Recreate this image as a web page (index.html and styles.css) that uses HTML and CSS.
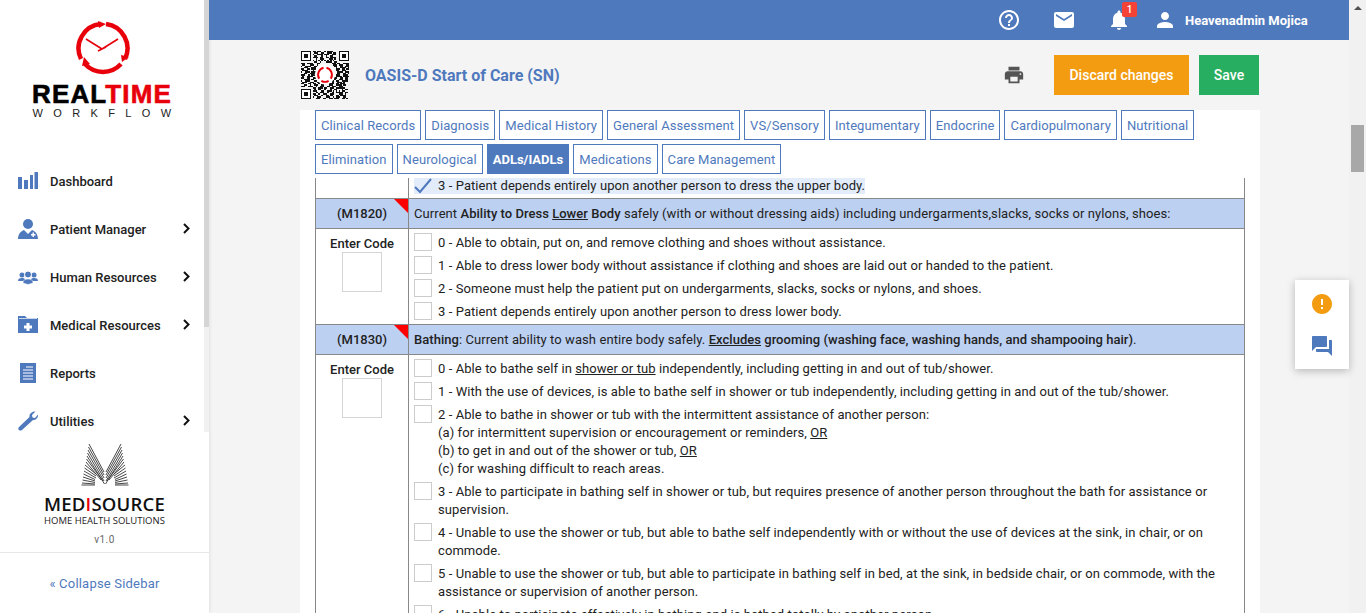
FILE: index.html
```html
<!DOCTYPE html>
<html lang="en">
<head>
    <meta charset="UTF-8">
    <title>OASIS-D Start of Care (SN)</title>
    <link rel="stylesheet" href="styles.css">
</head>
<body>
    <aside class="sidebar">
        <div class="sidebar-top">
            <div class="sidebar-scroll">
                <div class="logo">
                    <svg class="logo-clock" width="56" height="56" viewBox="0 0 56 56">
                        <g fill="none" stroke="#e8000b" stroke-width="4.5">
                            <path d="M26 4 A24.5 24.5 0 0 0 6 39"/>
                            <path d="M31 4 A24.5 24.5 0 0 1 50 39"/>
                            <path d="M10 44 A24.5 24.5 0 0 0 46 44"/>
                        </g>
                        <path d="M23 1 L31 4 L24 8Z M47 42 L54 37 L46 35Z M9 37 L7 46 L15 44Z" fill="#e8000b"/>
                        <path d="M27 29 L11 19 M27 29 L43 19 M23 31 L31 27" stroke="#e8000b" stroke-width="1.6" fill="none"/>
                    </svg>
                    <div class="logo-name"><span>REAL</span><span class="red">TIME</span></div>
                    <div class="logo-sub">WORKFLOW</div>
                </div>
                <nav class="nav">
                    <a class="nav-item">
                        <svg class="nav-icon" viewBox="0 0 20 20"><path d="M0 6h4v12H0zM6 9h4v9H6zM12 4h3v14h-3zM16.500 1H20v17h-3.500z"/></svg>
                        <span>Dashboard</span>
                    </a>
                    <a class="nav-item">
                        <svg class="nav-icon" viewBox="0 0 20 20"><circle cx="10" cy="5" r="5"/><path d="M0 20c0-5 3-8 6-9l4 4 4-4c3 1 6 4 6 9z"/><path d="M13 15h1.500v-1.500h1.500V15h1.500v1.500H16V18h-1.500v-1.500H13z" fill="#fff"/></svg>
                        <span>Patient Manager</span>
                        <svg class="chev" width="7" height="11" viewBox="0 0 7 11"><path d="M1 1l4.500 4.500L1 10" fill="none" stroke="#111" stroke-width="2"/></svg>
                    </a>
                    <a class="nav-item">
                        <svg class="nav-icon" viewBox="0 0 20 20"><circle cx="4" cy="8" r="2.500"/><circle cx="16" cy="8" r="2.500"/><path d="M0 14c0-2 1-3 4-3s3 1 3 3zM13 14c0-2 0-3 3-3s4 1 4 3z"/><circle cx="10" cy="7.500" r="3.500" stroke="#fff"/><path d="M5 16c0-3 2-4 5-4s5 1 5 4l-5 1.500z" stroke="#fff" stroke-width=".5"/></svg>
                        <span>Human Resources</span>
                        <svg class="chev" width="7" height="11" viewBox="0 0 7 11"><path d="M1 1l4.500 4.500L1 10" fill="none" stroke="#111" stroke-width="2"/></svg>
                    </a>
                    <a class="nav-item">
                        <svg class="nav-icon" viewBox="0 0 20 20"><path d="M0 1h7l2 2h11v15H0z"/><path d="M1 3.500h18" stroke="#fff" stroke-width=".7"/><path d="M8.500 8h3v2.500H14v3h-2.500V16h-3v-2.500H6v-3h2.500z" fill="#fff"/></svg>
                        <span>Medical Resources</span>
                        <svg class="chev" width="7" height="11" viewBox="0 0 7 11"><path d="M1 1l4.500 4.500L1 10" fill="none" stroke="#111" stroke-width="2"/></svg>
                    </a>
                    <a class="nav-item">
                        <svg class="nav-icon" viewBox="0 0 20 20"><path d="M2 0h16v20H2z"/><path d="M8 4h7M5 7h10M5 10h10M5 13h10M5 16h10" stroke="#fff" stroke-width="1"/></svg>
                        <span>Reports</span>
                    </a>
                    <a class="nav-item">
                        <svg class="nav-icon" viewBox="0 0 20 20"><path d="M20 3.500c.5 3-2 6-5 5.500L4 19c-1 1-3 .5-3.500-.5-.5-1 0-2 .5-2.500L11.500 6c-.5-3 2.500-6 6-5.500L14 4l.5 2.500L17 7z"/></svg>
                        <span>Utilities</span>
                        <svg class="chev" width="7" height="11" viewBox="0 0 7 11"><path d="M1 1l4.500 4.500L1 10" fill="none" stroke="#111" stroke-width="2"/></svg>
                    </a>
                </nav>
            </div>
            <div class="side-track"><div class="side-thumb"></div></div>
        </div>
        <div class="brand">
            <svg class="brand-mark" width="48" height="42" viewBox="0 0 48 42">
                <g stroke="#333" stroke-width=".9" fill="none">
                    <path d="M8 0L23 28M7.500 3L23 31M7 6L23 34M6.500 9L23 37M6 12L23.500 40M5.500 15L22 37M5 18L20 36"/>
                    <path d="M4 21L15 30M3.500 24L15 32M3 27L15 34M2.500 30L14 35.500M2 33L14 37M1.500 36L14 38.500M1 39L14 40M.5 41H14"/>
                    <path d="M40 0L25 28M40.500 3L25 31M41 6L25 34M41.500 9L25 37M42 12L24.500 40M42.500 15L26 37M43 18L28 36"/>
                    <path d="M44 21L33 30M44.500 24L33 32M45 27L33 34M45.500 30L34 35.500M46 33L34 37M46.500 36L34 38.500M47 39L34 40M47.500 41H34"/>
                </g>
            </svg>
            <div class="brand-name">MED<span class="red">I</span>SOURCE</div>
            <div class="brand-sub">HOME HEALTH SOLUTIONS</div>
            <div class="version">v1.0</div>
        </div>
        <a class="collapse">« Collapse Sidebar</a>
    </aside>

    <div class="main">
        <header class="topbar">
            <svg class="top-icon" width="24" height="24" viewBox="0 0 24 24"><path fill="#fff" d="M11 18h2v-2h-2v2zm1-16C6.480 2 2 6.480 2 12s4.480 10 10 10 10-4.480 10-10S17.520 2 12 2zm0 18c-4.410 0-8-3.590-8-8s3.590-8 8-8 8 3.590 8 8-3.590 8-8 8zm0-14c-2.210 0-4 1.790-4 4h2c0-1.100.9-2 2-2s2 .9 2 2c0 2-3 1.750-3 5h2c0-2.250 3-2.500 3-5 0-2.210-1.790-4-4-4z"/></svg>
            <svg class="top-icon" width="24" height="24" viewBox="0 0 24 24"><path fill="#fff" d="M20 4H4c-1.100 0-2 .9-2 2v12c0 1.100.9 2 2 2h16c1.100 0 2-.9 2-2V6c0-1.100-.9-2-2-2zm0 4-8 5-8-5V6l8 5 8-5v2z"/></svg>
            <div class="bell">
                <svg width="24" height="24" viewBox="0 0 24 24"><path fill="#fff" d="M12 22c1.100 0 2-.9 2-2h-4c0 1.100.9 2 2 2zm6-6v-5c0-3.070-1.630-5.640-4.500-6.320V4c0-.83-.67-1.500-1.500-1.500s-1.500.67-1.500 1.500v.68C7.640 5.360 6 7.920 6 11v5l-2 2v1h16v-1l-2-2z"/></svg>
                <span class="badge">1</span>
            </div>
            <svg class="user-icon" width="24" height="24" viewBox="0 0 24 24"><path fill="#fff" d="M12 12c2.210 0 4-1.790 4-4s-1.790-4-4-4-4 1.790-4 4 1.790 4 4 4zm0 2c-2.670 0-8 1.340-8 4v2h16v-2c0-2.660-5.330-4-8-4z"/></svg>
            <span class="user-name">Heavenadmin Mojica</span>
        </header>

        <div class="content">
            <div class="title-row">
                <svg class="qr" width="48" height="48" viewBox="0 0 33 33" shape-rendering="crispEdges">
                    <path fill="#111" d="M0 0h7v7H0zM26 0h7v7h-7zM0 26h7v7H0z"/>
                    <path fill="#fff" d="M1 1h5v5H1zM27 1h5v5h-5zM1 27h5v5H1z"/>
                    <path fill="#111" d="M2 2h3v3H2zM28 2h3v3h-3zM2 28h3v3H2z"/>
                    <path fill="none" stroke="#111" stroke-width="1" d="M8 .5h2m1 0h3m2 0h1m1 0h4M9 1.500h3m2 0h2m2 0h3m1 0h2M8 2.500h1m2 0h4m1 0h3m2 0h3M9 3.500h2m3 0h1m2 0h1m2 0h2M8 4.500h4m1 0h2m2 0h2m1 0h4M10 5.500h1m2 0h3m3 0h3m1 0h1M8 6.500h1m1 0h1m1 0h1m1 0h1m1 0h1m1 0h1m1 0h1m1 0h1M9 7.500h2m2 0h1m3 0h4m2 0h2M0 8.500h3m1 0h4m3 0h2m8 0h3m1 0h2m2 0h4M1 9.500h2m3 0h3m2 0h1m10 0h3m1 0h3m2 0h2M0 10.500h1m2 0h4m2 0h2m12 0h2m2 0h2m1 0h4M2 11.500h3m2 0h3m14 0h1m2 0h4m1 0h1M0 12.500h2m2 0h2m1 0h3m14 0h3m1 0h2m1 0h3M1 13.500h4m3 0h1m15 0h2m2 0h3M0 14.500h1m2 0h3m1 0h3m15 0h4m1 0h3M2 15.500h2m2 0h4m15 0h2m2 0h2m1 0h1M0 16.500h3m2 0h1m1 0h3m14 0h3m2 0h3M1 17.500h1m2 0h4m2 0h1m13 0h4m1 0h4M0 18.500h2m2 0h2m2 0h3m12 0h2m2 0h2m1 0h2M2 19.500h4m1 0h2m2 0h2m10 0h1m2 0h3m1 0h2M0 20.500h1m2 0h3m3 0h2m2 0h1m6 0h3m1 0h2m2 0h4M1 21.500h3m2 0h3m2 0h3m2 0h4m1 0h2m2 0h3m1 0h1M0 22.500h2m3 0h2m1 0h2m2 0h1m2 0h2m2 0h4m1 0h2m1 0h3M2 23.500h2m2 0h1m2 0h3m2 0h2m3 0h3m2 0h4m1 0h2M0 24.500h3m2 0h3m2 0h1m2 0h3m2 0h2m1 0h3m2 0h3M8 25.500h2m2 0h3m1 0h2m2 0h3m1 0h6M9 26.500h1m2 0h2m2 0h1m3 0h1m2 0h2m3 0h1m1 0h2M8 27.500h3m3 0h2m2 0h3m1 0h1m1 0h1m1 0h1m1 0h2M10 28.500h2m1 0h3m2 0h1m2 0h2m1 0h5m1 0h2M8 29.500h2m2 0h1m2 0h3m2 0h3m3 0h3m1 0h1M9 30.500h3m2 0h1m2 0h2m1 0h2m2 0h2m1 0h4M8 31.500h1m2 0h3m3 0h3m2 0h1m1 0h3m2 0h2M10 32.500h3m2 0h2m2 0h3m1 0h3m2 0h2m1 0h1"/>
                    <circle cx="16.500" cy="16" r="7" fill="#fff" shape-rendering="auto"/>
                    <g fill="none" stroke="#e8000b" stroke-width="1.300" shape-rendering="auto">
                        <path d="M15.500 11.500A5 5 0 0 0 12.500 19"/>
                        <path d="M17.500 11.500A5 5 0 0 1 20.500 19"/>
                        <path d="M14 20.500A5 5 0 0 0 19 20.500"/>
                    </g>
                </svg>
                <h1 class="title">OASIS-D Start of Care (SN)</h1>
                <svg class="print" width="22" height="22" viewBox="0 0 24 24"><path fill="#555" d="M19 8H5c-1.660 0-3 1.340-3 3v6h4v4h12v-4h4v-6c0-1.660-1.340-3-3-3zm-3 11H8v-5h8v5zm3-7c-.55 0-1-.45-1-1s.45-1 1-1 1 .45 1 1-.45 1-1 1zm-1-9H6v4h12V3z"/></svg>
                <button class="btn btn-discard">Discard changes</button>
                <button class="btn btn-save">Save</button>
            </div>

            <div class="card">
                <div class="tabs">
                    <a class="tab">Clinical Records</a>
                    <a class="tab">Diagnosis</a>
                    <a class="tab">Medical History</a>
                    <a class="tab">General Assessment</a>
                    <a class="tab">VS/Sensory</a>
                    <a class="tab">Integumentary</a>
                    <a class="tab">Endocrine</a>
                    <a class="tab">Cardiopulmonary</a>
                    <a class="tab">Nutritional</a>
                    <a class="tab">Elimination</a>
                    <a class="tab">Neurological</a>
                    <a class="tab active">ADLs/IADLs</a>
                    <a class="tab">Medications</a>
                    <a class="tab">Care Management</a>
                </div>

                <div class="form-table">
                    <div class="row">
                        <div class="code-col"></div>
                        <div class="opts opts-top">
                            <div class="opt checked">
                                <svg class="check" width="18" height="16" viewBox="0 0 18 16"><path d="M1 9l5 5L17 1" fill="none" stroke="#4f79bd" stroke-width="2"/></svg>
                                <span>3 - Patient depends entirely upon another person to dress the upper body.</span>
                            </div>
                        </div>
                    </div>

                    <div class="row head">
                        <div class="code-col code-id">(M1820)</div>
                        <div class="head-text">Current <b>Ability to Dress <u>Lower</u> Body</b> safely (with or without dressing aids) including undergarments,slacks, socks or nylons, shoes:</div>
                    </div>
                    <div class="row">
                        <div class="code-col enter">
                            <b>Enter Code</b>
                            <div class="code-box"></div>
                        </div>
                        <div class="opts">
                            <div class="opt"><i class="box"></i><span>0 - Able to obtain, put on, and remove clothing and shoes without assistance.</span></div>
                            <div class="opt"><i class="box"></i><span>1 - Able to dress lower body without assistance if clothing and shoes are laid out or handed to the patient.</span></div>
                            <div class="opt"><i class="box"></i><span>2 - Someone must help the patient put on undergarments, slacks, socks or nylons, and shoes.</span></div>
                            <div class="opt"><i class="box"></i><span>3 - Patient depends entirely upon another person to dress lower body.</span></div>
                        </div>
                    </div>

                    <div class="row head">
                        <div class="code-col code-id">(M1830)</div>
                        <div class="head-text"><b>Bathing</b>: Current ability to wash entire body safely. <b><u>Excludes</u> grooming (washing face, washing hands, and shampooing hair)</b>.</div>
                    </div>
                    <div class="row">
                        <div class="code-col enter">
                            <b>Enter Code</b>
                            <div class="code-box"></div>
                        </div>
                        <div class="opts">
                            <div class="opt"><i class="box"></i><span>0 - Able to bathe self in <u>shower or tub</u> independently, including getting in and out of tub/shower.</span></div>
                            <div class="opt"><i class="box"></i><span>1 - With the use of devices, is able to bathe self in shower or tub independently, including getting in and out of the tub/shower.</span></div>
                            <div class="opt"><i class="box"></i><span>2 - Able to bathe in shower or tub with the intermittent assistance of another person:<br>(a) for intermittent supervision or encouragement or reminders, <u>OR</u><br>(b) to get in and out of the shower or tub, <u>OR</u><br>(c) for washing difficult to reach areas.</span></div>
                            <div class="opt"><i class="box"></i><span>3 - Able to participate in bathing self in shower or tub, but requires presence of another person throughout the bath for assistance or supervision.</span></div>
                            <div class="opt"><i class="box"></i><span>4 - Unable to use the shower or tub, but able to bathe self independently with or without the use of devices at the sink, in chair, or on commode.</span></div>
                            <div class="opt"><i class="box"></i><span>5 - Unable to use the shower or tub, but able to participate in bathing self in bed, at the sink, in bedside chair, or on commode, with the assistance or supervision of another person.</span></div>
                            <div class="opt"><i class="box"></i><span>6 - Unable to participate effectively in bathing and is bathed totally by another person.</span></div>
                        </div>
                    </div>
                </div>
            </div>
        </div>
    </div>

    <div class="page-scroll">
        <div class="arrow-up"></div>
        <div class="page-thumb"></div>
    </div>

    <div class="float-panel">
        <svg width="24" height="24" viewBox="0 0 24 24"><path fill="#f39c12" d="M12 2C6.480 2 2 6.480 2 12s4.480 10 10 10 10-4.480 10-10S17.520 2 12 2zm1 15h-2v-2h2v2zm0-4h-2V7h2v6z"/></svg>
        <svg width="24" height="24" viewBox="0 0 24 24"><path fill="#4f79bd" d="M21 6h-2v9H6v2c0 .55.45 1 1 1h11l4 4V7c0-.55-.45-1-1-1zm-4 6V3c0-.55-.45-1-1-1H3c-.55 0-1 .45-1 1v14l4-4h10c.55 0 1-.45 1-1z"/></svg>
    </div>
</body>
</html>
```

FILE: styles.css
```css
* {
    margin: 0;
    padding: 0;
    box-sizing: border-box;
}

html, body {
    height: 100%;
    overflow: hidden;
}

body {
    display: flex;
    font-family: Roboto, 'Liberation Sans', sans-serif;
    font-size: 13px;
    color: #222;
    background: #f4f4f4;
}

.red {
    color: #e8000b;
}

/* sidebar */
.sidebar {
    width: 209px;
    flex-shrink: 0;
    height: 613px;
    background: #fff;
    box-shadow: 1px 0 3px rgba(0, 0, 0, 0.08);
    display: flex;
    flex-direction: column;
}

.sidebar-top {
    height: 432px;
    flex-shrink: 0;
    display: flex;
    overflow: hidden;
}

.sidebar-scroll {
    flex: 1;
    min-width: 0;
}

.side-track {
    width: 5px;
    flex-shrink: 0;
    background: #f1f1f1;
}

.side-thumb {
    width: 5px;
    height: 327px;
    background: #d5d5d5;
}

.logo {
    display: flex;
    flex-direction: column;
    align-items: center;
    padding-top: 20px;
    height: 157px;
}

.logo-clock {
    margin-left: 2px;
}

.logo-name {
    font-family: 'Liberation Sans', sans-serif;
    font-weight: 700;
    font-size: 26px;
    line-height: 20px;
    letter-spacing: 1.1px;
    margin-top: 8px;
    color: #000;
    -webkit-text-stroke: 0.6px;
}

.logo-sub {
    font-family: 'Liberation Sans', sans-serif;
    font-size: 11px;
    line-height: 12px;
    letter-spacing: 10.4px;
    margin-right: -10px;
    margin-top: 3px;
    color: #222;
}

.nav-item {
    display: flex;
    align-items: center;
    height: 48px;
    padding-left: 18px;
    color: #222;
    font-weight: 500;
    font-size: 13px;
}

.nav-icon {
    width: 20px;
    height: 20px;
    fill: #4f79bd;
    margin-right: 12px;
    flex-shrink: 0;
}

.chev {
    margin-left: auto;
    margin-right: 14px;
    margin-top: -1px;
}

.brand {
    display: flex;
    flex-direction: column;
    align-items: center;
    flex-shrink: 0;
    padding-top: 12px;
    height: 121px;
    border-bottom: 1px solid #e8e8e8;
}

.brand-name {
    font-family: 'Open Sans', sans-serif;
    font-weight: 600;
    font-size: 18.500px;
    line-height: 14px;
    margin-top: 11px;
    color: #111;
    letter-spacing: 0.2px;
}

.brand-sub {
    font-family: 'Open Sans', sans-serif;
    font-size: 9.500px;
    line-height: 10px;
    color: #222;
    margin-top: 5px;
}

.version {
    font-size: 10px;
    line-height: 12px;
    letter-spacing: 0.5px;
    margin-top: 8px;
    color: #666;
}

.collapse {
    display: block;
    text-align: center;
    color: #4f79bd;
    font-size: 13px;
    letter-spacing: 0.2px;
    padding-top: 1px;
    line-height: 59px;
}

/* main area */
.main {
    flex: 1;
    min-width: 0;
    height: 613px;
    overflow: hidden;
}

.topbar {
    height: 40px;
    background: #4f79bd;
    display: flex;
    align-items: center;
    padding-left: 788px;
}

.top-icon {
    margin-right: 31px;
}

.bell {
    position: relative;
    width: 24px;
    height: 24px;
}

.badge {
    position: absolute;
    top: -6px;
    left: 15px;
    width: 15px;
    height: 15px;
    border-radius: 2px;
    background: #f44336;
    color: #fff;
    font-size: 10px;
    line-height: 15px;
    text-align: center;
    font-weight: 500;
}

.user-icon {
    margin-left: 22px;
}

.user-name {
    margin-left: 8px;
    color: #fff;
    font-weight: 700;
    font-size: 13px;
}

.content {
    width: 960px;
    margin-left: 91px;
}

.title-row {
    height: 70px;
    display: flex;
    align-items: center;
}

.qr {
    margin-left: 1px;
}

.title {
    margin-left: 16px;
    font-size: 16px;
    font-weight: 700;
    color: #4f79bd;
}

.print {
    margin-left: auto;
    margin-right: 29px;
}

.btn {
    height: 40px;
    border: none;
    color: #fff;
    font-family: Roboto, sans-serif;
    font-size: 14px;
    font-weight: 500;
}

.btn-discard {
    width: 135px;
    background: #f39c12;
}

.btn-save {
    width: 60px;
    margin-left: 10px;
    margin-right: 1px;
    background: #27ae60;
}

.card {
    background: #fff;
    padding: 0 15px;
}

.tabs {
    display: flex;
    flex-wrap: wrap;
    gap: 4px;
    height: 68px;
    align-content: flex-start;
}

.tab {
    height: 30px;
    padding: 0 5px;
    border: 1px solid #4f79bd;
    color: #4f79bd;
    font-size: 13px;
    line-height: 30px;
    letter-spacing: 0.09px;
}

.tab.active {
    background: #4f79bd;
    color: #fff;
    font-weight: 700;
    letter-spacing: 0;
}

.form-table {
    border-left: 1px solid #888;
    border-right: 1px solid #888;
}

.row {
    display: flex;
    border-bottom: 1px solid #888;
}

.code-col {
    width: 93px;
    flex-shrink: 0;
    border-right: 1px solid #888;
}

.head {
    height: 30px;
    background: #bcd0f2;
}

.code-id {
    position: relative;
    text-align: center;
    font-weight: 500;
    line-height: 29px;
}

.code-id::after {
    content: '';
    position: absolute;
    top: 0;
    right: 0;
    border-top: 14px solid #f00;
    border-left: 14px solid transparent;
}

.head-text {
    padding-left: 5px;
    font-size: 13px;
    line-height: 29px;
    letter-spacing: 0.08px;
}

.head-text b {
    font-weight: 500;
    letter-spacing: 0.03px;
}

.enter {
    text-align: center;
    padding-top: 7px;
}

.enter b {
    display: block;
    font-weight: 500;
    line-height: 16px;
}

.code-box {
    width: 40px;
    height: 40px;
    margin: 0 auto;
    border: 1px solid #d5d5d5;
}

.opts {
    flex: 1;
    padding: 4px 5px;
    min-width: 0;
}

.opts-top {
    padding: 0 5px 4px;
}

.opt {
    display: flex;
    font-size: 13px;
    line-height: 18px;
    margin-bottom: 5px;
    letter-spacing: 0.08px;
}

.opt span {
    padding-top: 1px;
    margin-bottom: -1px;
}

.opt:last-child {
    margin-bottom: 0;
}

.opt.checked {
    align-items: center;
    background: #e3ecfb;
    width: fit-content;
    height: 16px;
    margin-bottom: 0;
}

.opt.checked span {
    padding-top: 0;
    margin-bottom: 0;
}

.check {
    margin-right: 6px;
    flex-shrink: 0;
}

.box {
    width: 18px;
    height: 18px;
    flex-shrink: 0;
    border: 1px solid #ccc;
    margin-right: 6px;
}

/* page scrollbar */
.page-scroll {
    width: 17px;
    flex-shrink: 0;
    height: 613px;
    background: #f1f1f1;
    padding-top: 6px;
}

.arrow-up {
    width: 0;
    margin: 0 auto;
    border-left: 4px solid transparent;
    border-right: 4px solid transparent;
    border-bottom: 4px solid #505050;
}

.page-thumb {
    width: 13px;
    height: 47px;
    margin: 115px auto 0;
    background: #a8a8a8;
}

/* floating panel */
.float-panel {
    position: fixed;
    top: 280px;
    right: 17px;
    width: 54px;
    height: 89px;
    background: #fff;
    box-shadow: 0 2px 8px rgba(0, 0, 0, 0.25);
    display: flex;
    flex-direction: column;
    align-items: center;
    justify-content: center;
    gap: 18px;
}
```
